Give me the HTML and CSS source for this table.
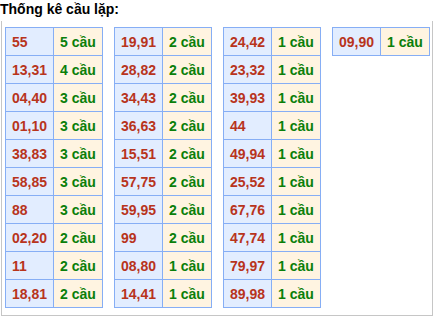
FILE: index.html
```html
<!DOCTYPE html>
<html lang="vi">
<head>
<meta charset="utf-8">
<link rel="stylesheet" href="styles.css">
</head>
<body>
<div class="title">Thống kê cầu lặp:</div>
<div class="box">
  <table class="tk">
    <tr><td class="num">55</td><td class="cnt">5 cầu</td></tr>
    <tr><td class="num">13,31</td><td class="cnt">4 cầu</td></tr>
    <tr><td class="num">04,40</td><td class="cnt">3 cầu</td></tr>
    <tr><td class="num">01,10</td><td class="cnt">3 cầu</td></tr>
    <tr><td class="num">38,83</td><td class="cnt">3 cầu</td></tr>
    <tr><td class="num">58,85</td><td class="cnt">3 cầu</td></tr>
    <tr><td class="num">88</td><td class="cnt">3 cầu</td></tr>
    <tr><td class="num">02,20</td><td class="cnt">2 cầu</td></tr>
    <tr><td class="num">11</td><td class="cnt">2 cầu</td></tr>
    <tr><td class="num">18,81</td><td class="cnt">2 cầu</td></tr>
  </table>
  <table class="tk">
    <tr><td class="num">19,91</td><td class="cnt">2 cầu</td></tr>
    <tr><td class="num">28,82</td><td class="cnt">2 cầu</td></tr>
    <tr><td class="num">34,43</td><td class="cnt">2 cầu</td></tr>
    <tr><td class="num">36,63</td><td class="cnt">2 cầu</td></tr>
    <tr><td class="num">15,51</td><td class="cnt">2 cầu</td></tr>
    <tr><td class="num">57,75</td><td class="cnt">2 cầu</td></tr>
    <tr><td class="num">59,95</td><td class="cnt">2 cầu</td></tr>
    <tr><td class="num">99</td><td class="cnt">2 cầu</td></tr>
    <tr><td class="num">08,80</td><td class="cnt">1 cầu</td></tr>
    <tr><td class="num">14,41</td><td class="cnt">1 cầu</td></tr>
  </table>
  <table class="tk">
    <tr><td class="num">24,42</td><td class="cnt">1 cầu</td></tr>
    <tr><td class="num">23,32</td><td class="cnt">1 cầu</td></tr>
    <tr><td class="num">39,93</td><td class="cnt">1 cầu</td></tr>
    <tr><td class="num">44</td><td class="cnt">1 cầu</td></tr>
    <tr><td class="num">49,94</td><td class="cnt">1 cầu</td></tr>
    <tr><td class="num">25,52</td><td class="cnt">1 cầu</td></tr>
    <tr><td class="num">67,76</td><td class="cnt">1 cầu</td></tr>
    <tr><td class="num">47,74</td><td class="cnt">1 cầu</td></tr>
    <tr><td class="num">79,97</td><td class="cnt">1 cầu</td></tr>
    <tr><td class="num">89,98</td><td class="cnt">1 cầu</td></tr>
  </table>
  <table class="tk">
    <tr><td class="num">09,90</td><td class="cnt">1 cầu</td></tr>
  </table>
</div>
</body>
</html>
```

FILE: styles.css
```css
html, body {
  margin: 0;
  padding: 0;
  background: #ffffff;
}
body {
  font-family: "Liberation Sans", Arial, sans-serif;
}
.title {
  font-weight: bold;
  font-size: 14px;
  line-height: 18px;
  height: 21px;
  color: #000;
}
.box {
  margin: 0 1px;
  height: 295px;
  box-sizing: border-box;
  border: 1px solid #c6c6c6;
  border-top: none;
  padding: 6px 0 0 3px;
  display: flex;
  align-items: flex-start;
  gap: 11px;
}
.tk {
  border-collapse: collapse;
  table-layout: fixed;
  width: 98px;
}
.tk td {
  border: 1px solid #86aef5;
  height: 28px;
  padding: 0 0 0 6px;
  font-size: 14px;
  font-weight: bold;
  white-space: nowrap;
  box-sizing: border-box;
}
.tk td.num {
  width: 48px;
  background: #e2edff;
  color: #b8341c;
}
.tk td.cnt {
  width: 49px;
  background: #fff4e1;
  color: #0a7f0a;
}
```
